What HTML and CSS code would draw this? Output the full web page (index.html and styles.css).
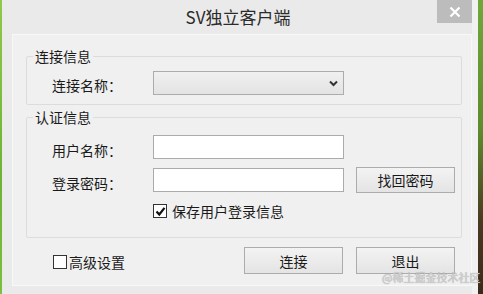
FILE: index.html
```html
<!DOCTYPE html>
<html lang="zh-CN">
<head>
<meta charset="utf-8">
<title>SV独立客户端</title>
<link rel="stylesheet" href="styles.css">
</head>
<body>
<div class="edge-left"></div>
<div class="window">
  <div class="titlebar">
    <div class="title">SV独立客户端</div>
    <div class="close">
      <svg width="12" height="12" viewBox="0 0 12 12"><path d="M1.5 1.5 L10.5 10.5 M10.5 1.5 L1.5 10.5" stroke="#fff" stroke-width="2.2" fill="none"/></svg>
    </div>
  </div>
  <div class="panel">
    <fieldset class="group g1">
      <legend>连接信息</legend>
      <div class="row">
        <span class="label">连接名称：</span>
        <div class="select">
          <svg width="9" height="7" viewBox="0 0 9 7"><path d="M1 1.5 L4.5 5 L8 1.5" stroke="#333" stroke-width="2" fill="none"/></svg>
        </div>
      </div>
    </fieldset>
    <fieldset class="group g2">
      <legend>认证信息</legend>
      <div class="row r1">
        <span class="label">用户名称：</span>
        <div class="input"></div>
      </div>
      <div class="row r2">
        <span class="label">登录密码：</span>
        <div class="input"></div>
        <button class="btn">找回密码</button>
      </div>
      <div class="row r3">
        <span class="label"></span>
        <label class="check"><span class="box checked"><svg width="11" height="11" viewBox="0 0 11 11"><path d="M1.5 5.5 L4.3 8.5 L9.5 1.8" stroke="#111" stroke-width="2.2" fill="none"/></svg></span>保存用户登录信息</label>
      </div>
    </fieldset>
    <div class="footer">
      <label class="check adv"><span class="box"></span>高级设置</label>
      <div class="buttons">
        <button class="btn big">连接</button>
        <button class="btn big">退出</button>
      </div>
    </div>
  </div>
  <div class="watermark">@稀土掘金技术社区</div>
</div>
<div class="edge-right"></div>
</body>
</html>
```
FILE: styles.css
```css
* { box-sizing: border-box; }
html, body { margin: 0; padding: 0; }
body {
  width: 483px;
  height: 294px;
  overflow: hidden;
  display: flex;
  font-family: "Noto Sans CJK SC", "Microsoft YaHei", sans-serif;
  color: #1a1a1a;
  background: #ebebeb;
}
.edge-left {
  width: 2px;
  background: linear-gradient(to bottom, #8fca48, #6fb232 60%, #7cbf3c);
}
.edge-right {
  flex: 1;
  background: linear-gradient(to bottom, #6fa83a 0%, #5e8a2c 45%, #4a3a22 75%, #3a2a1a 100%);
}
.window {
  position: relative;
  width: 476px;
  height: 294px;
  background: #eaeaea;
  border-right: 6px solid #f1f1f1;
  padding-left: 10px;
  display: flex;
  flex-direction: column;
}
.titlebar {
  height: 34px;
  display: grid;
  grid-template-columns: 1fr auto 1fr;
  margin-left: -10px;
}
.title {
  grid-column: 2;
  font-size: 17px;
  line-height: 20px;
  padding-top: 7px;
  color: #2b2b2b;
  padding-left: 2px;
}
.close {
  grid-column: 3;
  justify-self: end;
  width: 35px;
  height: 23px;
  background: #bcbcbc;
  display: flex;
  align-items: center;
  justify-content: center;
}
.panel {
  width: 460px;
  height: 252px;
  background: #f0f0f0;
  border: 1px solid #f8f8f8;
  padding: 0 9px 0 13px;
}
.group {
  margin: 0;
  padding: 0;
  border: 1px solid #dcdcdc;
  border-radius: 2px;
  min-width: 0;
}
.group legend {
  font-size: 14px;
  line-height: 18px;
  padding: 0 2px;
  margin-left: 6px;
  color: #1a1a1a;
}
.g1 { margin-top: 12px; padding: 6px 0 9px; }
.g2 { margin-top: 3px; padding: 8px 0 19px; }
.row {
  display: grid;
  grid-template-columns: 89px 191px 99px;
  column-gap: 12px;
  align-items: center;
  padding-left: 25px;
  font-size: 14px;
}
.label { line-height: 18px; margin-top: 4px; }
.r1 .label, .r2 .label { margin-top: 6px; }
.r3 .label { margin-top: 0; }
.select {
  height: 24px;
  border: 1px solid #acacac;
  background: linear-gradient(to bottom, #f0f0f0, #e3e3e3);
  display: flex;
  align-items: center;
  justify-content: flex-end;
  padding-right: 5px;
}
.input {
  height: 24px;
  border: 1px solid #ababab;
  background: #fff;
}
.r1 { height: 26px; }
.r2 { height: 26px; margin-top: 7px; }
.r3 { height: 16px; margin-top: 9px; }
.btn {
  font-family: inherit;
  font-size: 14px;
  color: #1a1a1a;
  height: 26px;
  width: 99px;
  border: 1px solid #acacac;
  background: linear-gradient(to bottom, #f3f3f3, #e4e4e4);
  padding: 0;
  line-height: 20px;
}
.check {
  display: flex;
  align-items: center;
  font-size: 14px;
  line-height: 18px;
}
.box {
  width: 14px;
  height: 14px;
  border: 1px solid #333;
  background: #fff;
  margin-right: 5px;
  display: flex;
  align-items: center;
  justify-content: center;
}
.r3 .check { grid-column: 2 / 4; }
.footer {
  margin-top: 9px;
  display: flex;
  align-items: center;
  padding: 0 7px 0 27px;
}
.adv { margin-top: 3px; }
.adv .box { margin-right: 2px; }
.buttons {
  margin-left: auto;
  display: flex;
  gap: 13px;
}
.btn.big { height: 27px; width: 99px; }
.watermark {
  position: absolute;
  left: 380px;
  top: 270px;
  font-size: 11px;
  line-height: 14px;
  color: #d0d0d0;
  text-shadow: 0 0 1px #9a9a9a;
  white-space: nowrap;
}
```
